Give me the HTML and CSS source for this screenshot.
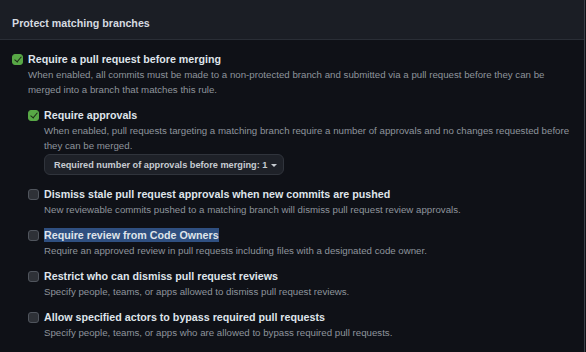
FILE: index.html
```html
<!DOCTYPE html>
<html lang="en">
<head>
    <meta charset="UTF-8">
    <meta name="viewport" content="width=device-width, initial-scale=1.0">
    <title>Branch protection</title>
    <link rel="stylesheet" href="styles.css">
</head>
<body>
    <div class="panel">
        <div class="panel-header">Protect matching branches</div>

        <div class="panel-body">
            <div class="rule">
                <span class="check checked"></span>
                <div class="rule-text">
                    <div class="rule-title">Require a pull request before merging</div>
                    <div class="rule-desc">When enabled, all commits must be made to a non-protected branch and submitted via a pull request before they can be merged into a branch that matches this rule.</div>

                    <div class="rule">
                        <span class="check checked"></span>
                        <div class="rule-text">
                            <div class="rule-title">Require approvals</div>
                            <div class="rule-desc">When enabled, pull requests targeting a matching branch require a number of approvals and no changes requested before they can be merged.</div>
                            <button class="select-btn">Required number of approvals before merging: 1 <span class="caret"></span></button>
                        </div>
                    </div>

                    <div class="rule">
                        <span class="check"></span>
                        <div class="rule-text">
                            <div class="rule-title">Dismiss stale pull request approvals when new commits are pushed</div>
                            <div class="rule-desc">New reviewable commits pushed to a matching branch will dismiss pull request review approvals.</div>
                        </div>
                    </div>

                    <div class="rule">
                        <span class="check"></span>
                        <div class="rule-text">
                            <div class="rule-title"><span class="selected">Require review from Code Owners</span></div>
                            <div class="rule-desc">Require an approved review in pull requests including files with a designated code owner.</div>
                        </div>
                    </div>

                    <div class="rule">
                        <span class="check"></span>
                        <div class="rule-text">
                            <div class="rule-title">Restrict who can dismiss pull request reviews</div>
                            <div class="rule-desc">Specify people, teams, or apps allowed to dismiss pull request reviews.</div>
                        </div>
                    </div>

                    <div class="rule">
                        <span class="check"></span>
                        <div class="rule-text">
                            <div class="rule-title">Allow specified actors to bypass required pull requests</div>
                            <div class="rule-desc">Specify people, teams, or apps who are allowed to bypass required pull requests.</div>
                        </div>
                    </div>
                </div>
            </div>
        </div>
    </div>
</body>
</html>
```

FILE: styles.css
```css
:root {
    --header-bg: #1b1e25;
    --body-bg: #0f1117;
    --border: #2a2e36;
    --title: #dfe4ea;
    --muted: #8e949c;
    --green: #58a846;
}

body {
    margin: 0;
    background: var(--body-bg);
    font-family: 'Liberation Sans', Arial, sans-serif;
    color: var(--title);
}

.panel {
    width: 584px;
    height: 352px;
    border-right: 1px solid #3a3f47;
    background: var(--body-bg);
}

.panel-header {
    height: 40px;
    box-sizing: border-box;
    padding: 15px 12px 0;
    background: var(--header-bg);
    border-bottom: 1px solid var(--border);
    font-size: 10.7px;
    font-weight: bold;
    line-height: 16px;
    color: #d5dae0;
}

.panel-body {
    padding: 12px 4px 0 12px;
}

.rule {
    display: flex;
    gap: 5px;
    margin-top: 11px;
}

.panel-body > .rule {
    margin-top: 0;
}

.rule-text {
    flex: 1;
}

.check {
    flex: none;
    width: 11px;
    height: 11px;
    margin-top: 2px;
    box-sizing: border-box;
    border: 1px solid #50555d;
    border-radius: 3px;
    background: #2e3137;
    position: relative;
}

.check.checked {
    border-color: var(--green);
    background: var(--green);
}

.check.checked::after {
    content: '';
    position: absolute;
    left: 3px;
    top: 0px;
    width: 3px;
    height: 6px;
    border: solid #1c2a18;
    border-width: 0 1.5px 1.5px 0;
    transform: rotate(40deg);
}

.rule-title {
    font-size: 10.7px;
    font-weight: bold;
    line-height: 15px;
    color: var(--title);
}

.selected {
    background: #2f4f80;
    padding: 1px 0;
}

.rule-desc {
    font-size: 9.7px;
    line-height: 15px;
    color: var(--muted);
    max-width: 538px;
}

.select-btn {
    display: block;
    margin: 1px 0 1px;
    width: 240px;
    height: 21px;
    padding: 0 9px;
    border: 1px solid #30343c;
    border-radius: 6px;
    background: #1e2128;
    color: #c7ccd2;
    font-family: inherit;
    font-size: 9.2px;
    font-weight: bold;
    text-align: left;
    white-space: nowrap;
}

.caret {
    display: inline-block;
    width: 0;
    height: 0;
    margin-left: 1px;
    vertical-align: middle;
    border-left: 3px solid transparent;
    border-right: 3px solid transparent;
    border-top: 3.5px solid #c7ccd2;
}
```
